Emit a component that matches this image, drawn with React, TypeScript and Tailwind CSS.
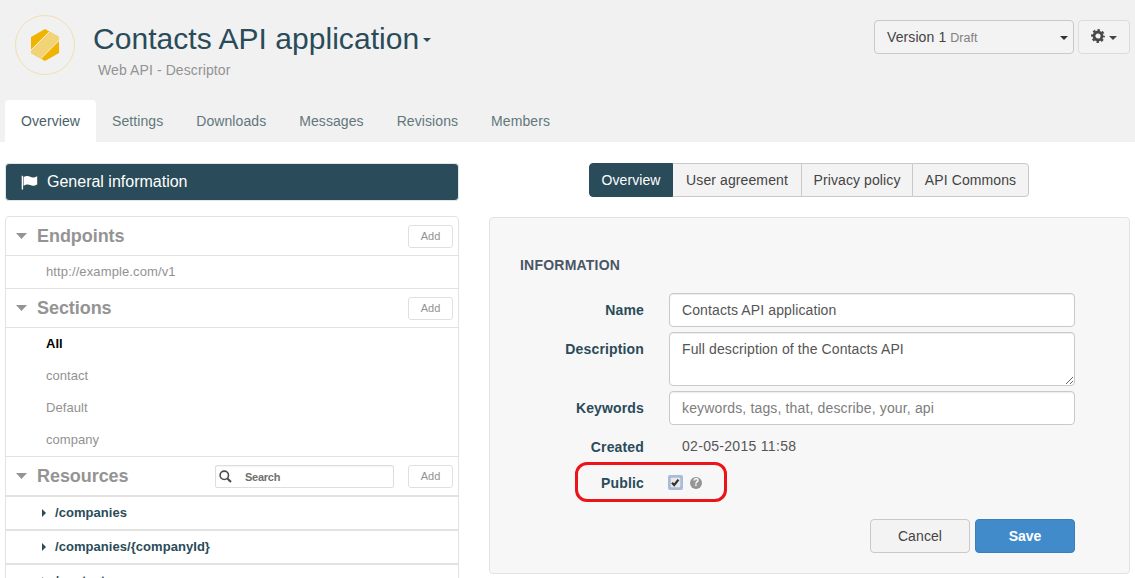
import type { ReactNode } from "react";

const tabs = ["Settings", "Downloads", "Messages", "Revisions", "Members"];
const sections = ["contact", "Default", "company"];
const resources = ["/companies", "/companies/{companyId}", "/contacts"];

function Caret({ className = "" }: { className?: string }) {
  return (
    <svg className={`h-1 w-2 shrink-0 ${className}`} viewBox="0 0 8 4" fill="currentColor">
      <path d="M0 0h8L4 4z" />
    </svg>
  );
}

function Logo() {
  return (
    <svg className="h-[60px] w-[60px] shrink-0" viewBox="0 0 60 60">
      <circle cx="30" cy="30" r="29.5" fill="none" stroke="#f0dfae" />
      <clipPath id="hex">
        <path d="M30 14 44 22V38L30 46 16 38V22z" />
      </clipPath>
      <g clipPath="url(#hex)">
        <path d="M0 0H60V60H0z" fill="#f0b400" />
        <path d="M0 51 51 0H69.5L0 69.5z" fill="#f2d375" />
        <path d="M0 51 51 0M0 69.5 69.5 0" stroke="#fbf3dc" strokeWidth="0.9" />
      </g>
    </svg>
  );
}

function GearIcon() {
  return (
    <svg className="h-[14px] w-[14px]" viewBox="0 0 14 14" fill="none" stroke="#484848">
      <circle cx="7" cy="7" r="4" strokeWidth="2.8" />
      <circle cx="7" cy="7" r="5.9" strokeWidth="2" strokeDasharray="2.5 2.134" strokeDashoffset="1.25" />
    </svg>
  );
}

function FlagIcon() {
  return (
    <svg className="h-[15px] w-[17px]" viewBox="0 0 17 15" fill="white">
      <path d="M0.7.8h1.4v13.7H.7z" />
      <path d="M2.6 2.1C5 .5 7.4.8 9.3 1.8c1.9 1 4 .9 6.9-.6v8.2c-2.6 1.6-5 1.6-6.9.7-1.9-.9-4-.9-6.7.7z" />
    </svg>
  );
}

function AddButton() {
  return (
    <button className="h-[23px] w-[45px] shrink-0 rounded-[3px] border border-[#e0e0e0] bg-white text-[11px] leading-[21px] text-[#929292]">
      Add
    </button>
  );
}

function GroupHeader({ title, children }: { title: string; children?: ReactNode }) {
  return (
    <div className="flex h-[38px] items-center pr-[5px] pl-[10px]">
      <svg className="mr-[10px] h-[6px] w-[11px] shrink-0" viewBox="0 0 11 6" fill="#949494">
        <path d="M0 0h11L5.5 6z" />
      </svg>
      <h2 className="text-lg leading-[38px] font-bold tracking-[-0.06px] text-[#949494]">{title}</h2>
      <div className="ml-auto flex items-center gap-[14px] pb-px pt-[2px]">
        {children}
        <AddButton />
      </div>
    </div>
  );
}

function Sidebar() {
  return (
    <aside className="w-[454px] shrink-0 pt-[21px]">
      <div className="h-[38px] rounded border border-[#e2e6e8] bg-[#2a4b59]">
        <div className="flex h-[36px] items-center pl-[15px] text-white">
          <FlagIcon />
          <span className="ml-[9px] text-base">General information</span>
        </div>
      </div>
      <div className="mt-[15px] rounded-t border border-[#e2e2e2]">
        <GroupHeader title="Endpoints" />
        <div className="h-[33px] border-t border-[#e2e2e2] pl-[40px] text-[13px] leading-[31px] tracking-[0.12px] text-[#929292]">
          http://example.com/v1
        </div>
        <div className="border-t border-[#e2e2e2]">
          <GroupHeader title="Sections" />
        </div>
        <ul className="h-[129px] border-t border-[#e2e2e2] pl-[40px] text-[13px] leading-8 text-[#929292]">
          <li className="font-bold text-black">All</li>
          {sections.map((s) => (
            <li key={s} className="tracking-[0.05px]">{s}</li>
          ))}
        </ul>
        <div className="border-t border-[#e2e2e2]">
          <GroupHeader title="Resources">
            <div className="flex h-[23px] w-[179px] items-center rounded-[2px] border border-[#dedede] pl-[3px] shadow-[inset_0_1px_1px_rgba(0,0,0,0.05)]">
              <svg className="mb-px h-[13px] w-[13px]" viewBox="0 0 13 13" fill="none" stroke="#4c4c4c">
                <circle cx="5.3" cy="5.3" r="4.2" strokeWidth="1.6" />
                <path d="M8.4 8.4 12 12" strokeWidth="2.1" />
              </svg>
              <span className="ml-[13px] pt-px text-[11px] font-bold tracking-[-0.25px] text-[#707070]">Search</span>
            </div>
          </GroupHeader>
        </div>
        {resources.map((r) => (
          <div
            key={r}
            className="flex h-[34px] items-center border-t-2 border-[#e2e2e2] pl-[36px] text-[13px] font-bold tracking-[0.05px] text-[#2a4b59]"
          >
            <svg className="mr-[9px] mb-px h-[8px] w-1" viewBox="0 0 4 8" fill="currentColor">
              <path d="M0 0v8l4-4z" />
            </svg>
            {r}
          </div>
        ))}
      </div>
    </aside>
  );
}

function Field({ label, children, className }: { label: string; children: ReactNode; className: string }) {
  return (
    <div className={`flex ${className}`}>
      <label className="w-[124px] shrink-0 pt-[7px] text-right font-bold tracking-[0.15px] text-[#2a4b59]">{label}</label>
      <div className="ml-[25px] w-[406px]">{children}</div>
    </div>
  );
}

const inputClass =
  "block w-full rounded border border-[#c9c9c9] bg-white px-3 py-[6px] text-sm leading-5 tracking-[0.11px] text-[#555] shadow-[inset_0_1px_1px_rgba(0,0,0,0.075)] outline-none placeholder:tracking-[0.15px] placeholder:text-[#7d7d7d]";

export default function App() {
  return (
    <div className="h-[578px] w-[1135px] overflow-hidden bg-white font-['Liberation_Sans',Arial,sans-serif] text-sm leading-5 text-[#444]">
      <header className="flex h-[142px] flex-col justify-between bg-[#f1f1f1]">
        <div className="flex pr-[5px] pl-[15px]">
          <div className="pt-[15px]">
            <Logo />
          </div>
          <div className="ml-[18px] pt-[22px]">
            <div className="flex items-center text-[#2a4b59]">
              <h1 className="text-[30px] leading-[34px] tracking-[0.04px]">Contacts API application</h1>
              <Caret className="mt-[2px] ml-[4px]" />
            </div>
            <p className="mt-[4px] ml-[5px] tracking-[0.1px] text-[#939393]">Web API - Descriptor</p>
          </div>
          <div className="mt-[20px] ml-auto flex h-[34px] gap-1">
            <button className="flex w-[200px] items-center rounded border border-[#c9c9c9] bg-[#f3f3f3] pr-[5px] pl-3">
              <span className="tracking-[0.1px]">Version 1</span>
              <span className="ml-[4px] pt-px text-[12.5px] text-[#808080]">Draft</span>
              <Caret className="mt-[2px] ml-auto text-[#333]" />
            </button>
            <button className="flex w-[52px] items-center gap-[4px] rounded border border-[#dcdcdc] bg-[#f3f3f3] pl-[12px]">
              <span className="pb-[2px]">
                <GearIcon />
              </span>
              <Caret className="mt-[2px] text-[#444]" />
            </button>
          </div>
        </div>
        <nav className="flex h-[42px] pl-[5px] leading-[42px] tracking-[0.08px] text-[#62777c]">
          <a className="w-[91px] rounded-t bg-white text-center text-[#496069]">Overview</a>
          <div className="ml-[16px] flex gap-[33px]">
            {tabs.map((t) => (
              <a key={t}>{t}</a>
            ))}
          </div>
        </nav>
      </header>

      <main className="flex gap-[30px] pl-[5px]">
        <Sidebar />
        <section className="w-[641px] pt-[21px]">
          <div className="ml-[100px] flex h-[34px] w-[440px] text-center leading-[32px] tracking-[0.1px]">
            <a className="w-[84px] rounded-l border border-[#2a4b59] bg-[#2a4b59] text-white">Overview</a>
            <a className="w-[128px] border-y border-[#c9c9c9] bg-[#f3f3f3]">User agreement</a>
            <a className="w-[111px] border-y border-l border-[#c9c9c9] bg-[#f3f3f3]">Privacy policy</a>
            <a className="flex-1 rounded-r border border-[#c9c9c9] bg-[#f3f3f3]">API Commons</a>
          </div>

          <div className="mt-[20px] h-[357px] rounded border border-[#e2e2e2] bg-[#f7f7f7] pl-[30px]">
            <h3 className="mt-[37px] mb-[18px] font-bold tracking-[0.22px] text-[#4a5666]">INFORMATION</h3>
            <Field label="Name" className="h-[39px]">
              <input className={inputClass} defaultValue="Contacts API application" />
            </Field>
            <Field label="Description" className="h-[59px]">
              <textarea className={`${inputClass} h-[54px] resize`} defaultValue="Full description of the Contacts API" />
            </Field>
            <Field label="Keywords" className="h-[39px]">
              <input className={inputClass} placeholder="keywords, tags, that, describe, your, api" />
            </Field>
            <Field label="Created" className="h-[36px]">
              <p className="pt-[6px] pl-[13px] tracking-[0.3px] text-[#555]">02-05-2015 11:58</p>
            </Field>
            <div className="relative">
              <Field label="Public" className="h-[53px]">
                <div className="flex items-center gap-[7px] pt-[9px]">
                  <svg className="-ml-px h-[15px] w-[15px]" viewBox="0 0 15 15">
                    <rect x="0.75" y="0.75" width="13.5" height="13.5" rx="1" fill="#e9ecf2" stroke="#a3bce6" strokeWidth="1.5" />
                    <rect x="2" y="2" width="11" height="11" fill="#e8e8e8" stroke="#8797b2" strokeWidth="0.8" />
                    <path d="m4 7.7 2.2 2.3 4.3-5.4" fill="none" stroke="#333" strokeWidth="2.2" />
                  </svg>
                  <span className="flex h-3 w-3 items-center justify-center rounded-full bg-[#949494] text-[10px] leading-3 font-bold text-white">
                    ?
                  </span>
                </div>
              </Field>
              <div className="absolute top-[-4px] left-[55px] h-[40px] w-[152px] rounded-[12px] border-3 border-[#ec1418]" />
            </div>
            <div className="flex gap-[5px] pl-[350px]">
              <button className="h-[34px] w-[100px] rounded border border-[#c9c9c9] bg-[#f3f3f3] tracking-[0.1px]">Cancel</button>
              <button className="h-[34px] w-[100px] rounded border border-[#3a7ebc] bg-[#428bca] font-bold text-white">
                Save
              </button>
            </div>
          </div>
        </section>
      </main>
    </div>
  );
}
